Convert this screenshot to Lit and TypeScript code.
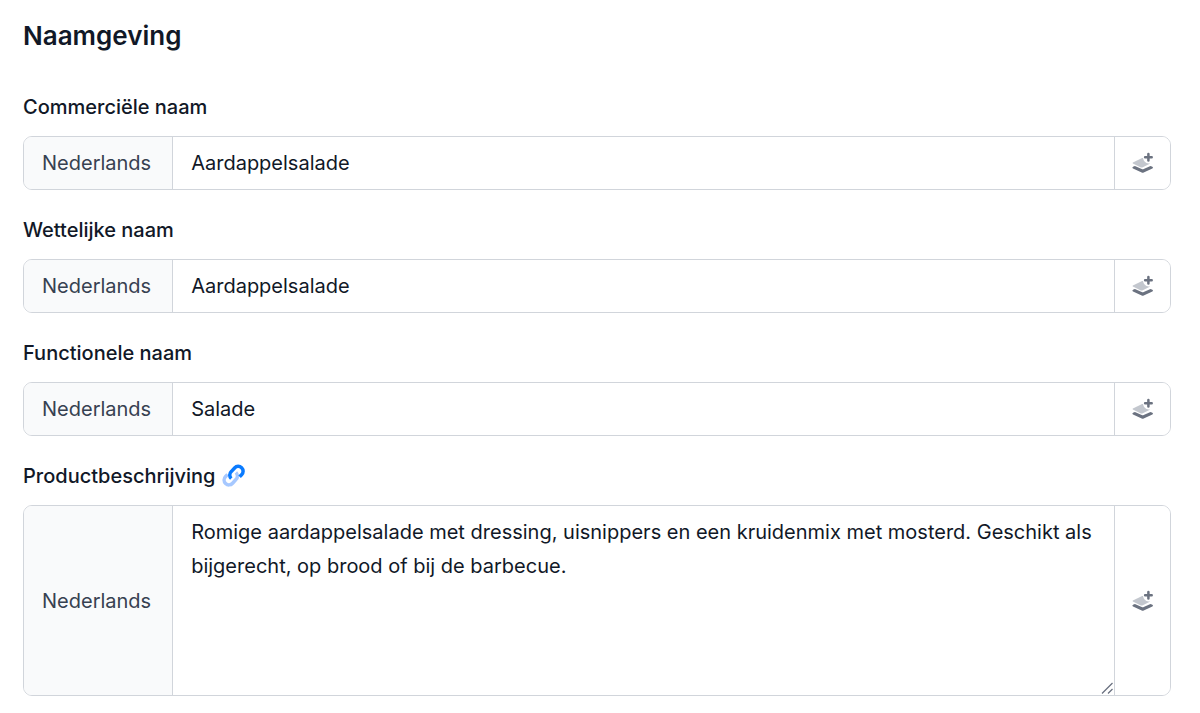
import { LitElement, html, css } from "lit";
import { customElement } from "lit/decorators.js";

interface Field {
  id: string;
  label: string;
  value: string;
  multiline?: boolean;
  linked?: boolean;
}

const FIELDS: Field[] = [
  { id: "commercial", label: "Commerciële naam", value: "Aardappelsalade" },
  { id: "legal", label: "Wettelijke naam", value: "Aardappelsalade" },
  { id: "functional", label: "Functionele naam", value: "Salade" },
  {
    id: "description",
    label: "Productbeschrijving",
    value:
      "Romige aardappelsalade met dressing, uisnippers en een kruidenmix met mosterd. Geschikt als bijgerecht, op brood of bij de barbecue.",
    multiline: true,
    linked: true,
  },
];

const layersPlusIcon = html`
  <svg width="22" height="22" viewBox="0 0 22 22" aria-hidden="true">
    <path
      fill="#c3c7ce"
      d="M.9 10.500 9.600 6.300c.5-.2 1-.3 1.500-.1.4 2.900 2.400 5 5.500 5.300l1.700.1-7.500 3.600c-.8.4-1.600.4-2.400 0L.9 11.500c-.5-.3-.5-.7 0-1z"
    />
    <path
      fill="#6b7280"
      d="M2.900 13.900 9.700 17.100c.6.3 1.400.3 2 0l6.800-3.200 1.900.8c.8.4.8 1.300 0 1.700L11.700 20.600c-.6.3-1.400.3-2 0L1 16.400c-.8-.4-.8-1.300 0-1.700z"
    />
    <path fill="none" stroke="#6b7280" stroke-width="2.500" stroke-linecap="round" d="M16.400 1.900v6.600M13.100 5.200h6.600" />
  </svg>
`;

const linkIcon = html`
  <svg width="24" height="24" viewBox="0 0 24 24" fill="none" stroke-width="3.500" aria-hidden="true">
    <path
      stroke="#a6c8ff"
      d="M13.900 8.600c2.100 2 2.100 5 0 7L10.600 19.200c-2 2.200-5 2.200-7 .2s-2-5 0-7l2-2"
    />
    <path
      stroke="#0a7bff"
      d="M9.300 14.600c-2.100-2-2.100-5 0-7L12.600 4c2-2.200 5-2.200 7-.2s2 5 0 7l-2 2"
    />
  </svg>
`;

@customElement("app-root")
export class AppRoot extends LitElement {
  static styles = css`
    :host {
      display: block;
      box-sizing: border-box;
      padding: 17px 29px 16px 23px;
      background: #fff;
      color: #111827;
      font: 400 20px/34px Inter, "Liberation Sans", sans-serif;
    }
    .title {
      margin: 0 0 35px;
      font-size: 26px;
      line-height: 38px;
      font-weight: 600;
    }
    .fields {
      display: grid;
      gap: 23px;
    }
    .caption {
      display: flex;
      align-items: center;
      gap: 6px;
      height: 33px;
      margin-bottom: 13px;
    }
    .label {
      font-weight: 500;
    }
    .link {
      display: flex;
    }
    .group {
      display: flex;
      border: 1px solid #d1d5db;
      border-radius: 9px;
      overflow: hidden;
    }
    .language {
      display: flex;
      align-items: center;
      box-sizing: border-box;
      padding: 0 21px 0 18px;
      border-right: 1px solid #d1d5db;
      background: #f9fafb;
      color: #374151;
    }
    .control {
      display: block;
      flex: 1;
      min-width: 0;
      box-sizing: border-box;
      margin: 0;
      padding: 9px 18px;
      border: 0;
      border-radius: 0;
      outline: 0;
      background: #fff;
      color: inherit;
      font: inherit;
    }
    .input {
      height: 52px;
    }
    .area {
      height: 189px;
      resize: vertical;
    }
    .area::-webkit-resizer {
      background: url("data:image/svg+xml,%3Csvg xmlns='http://www.w3.org/2000/svg' width='15' height='15' viewBox='0 0 15 15'%3E%3Cpath d='M3 13.500 13.500 3M9 13.500 13.500 9' fill='none' stroke='%236b7280' stroke-width='1.300'/%3E%3C/svg%3E")
        right bottom no-repeat;
    }
    .add {
      display: flex;
      align-items: center;
      justify-content: center;
      width: 56px;
      padding: 0;
      border: 0;
      border-left: 1px solid #d1d5db;
      background: #fff;
      cursor: pointer;
    }
  `;

  private renderField(field: Field) {
    return html`
      <div class="field">
        <div class="caption">
          <label class="label" for=${field.id}>${field.label}</label>
          ${field.linked
            ? html`<a class="link" href="#description" aria-label="Koppeling">${linkIcon}</a>`
            : null}
        </div>
        <div class="group">
          <span class="language">Nederlands</span>
          ${field.multiline
            ? html`<textarea class="control area" id=${field.id} spellcheck="false" .value=${field.value}></textarea>`
            : html`<input class="control input" id=${field.id} type="text" .value=${field.value} />`}
          <button class="add" type="button" aria-label="Vertaling toevoegen">${layersPlusIcon}</button>
        </div>
      </div>
    `;
  }

  render() {
    return html`
      <h2 class="title">Naamgeving</h2>
      <div class="fields">${FIELDS.map((field) => this.renderField(field))}</div>
    `;
  }
}
